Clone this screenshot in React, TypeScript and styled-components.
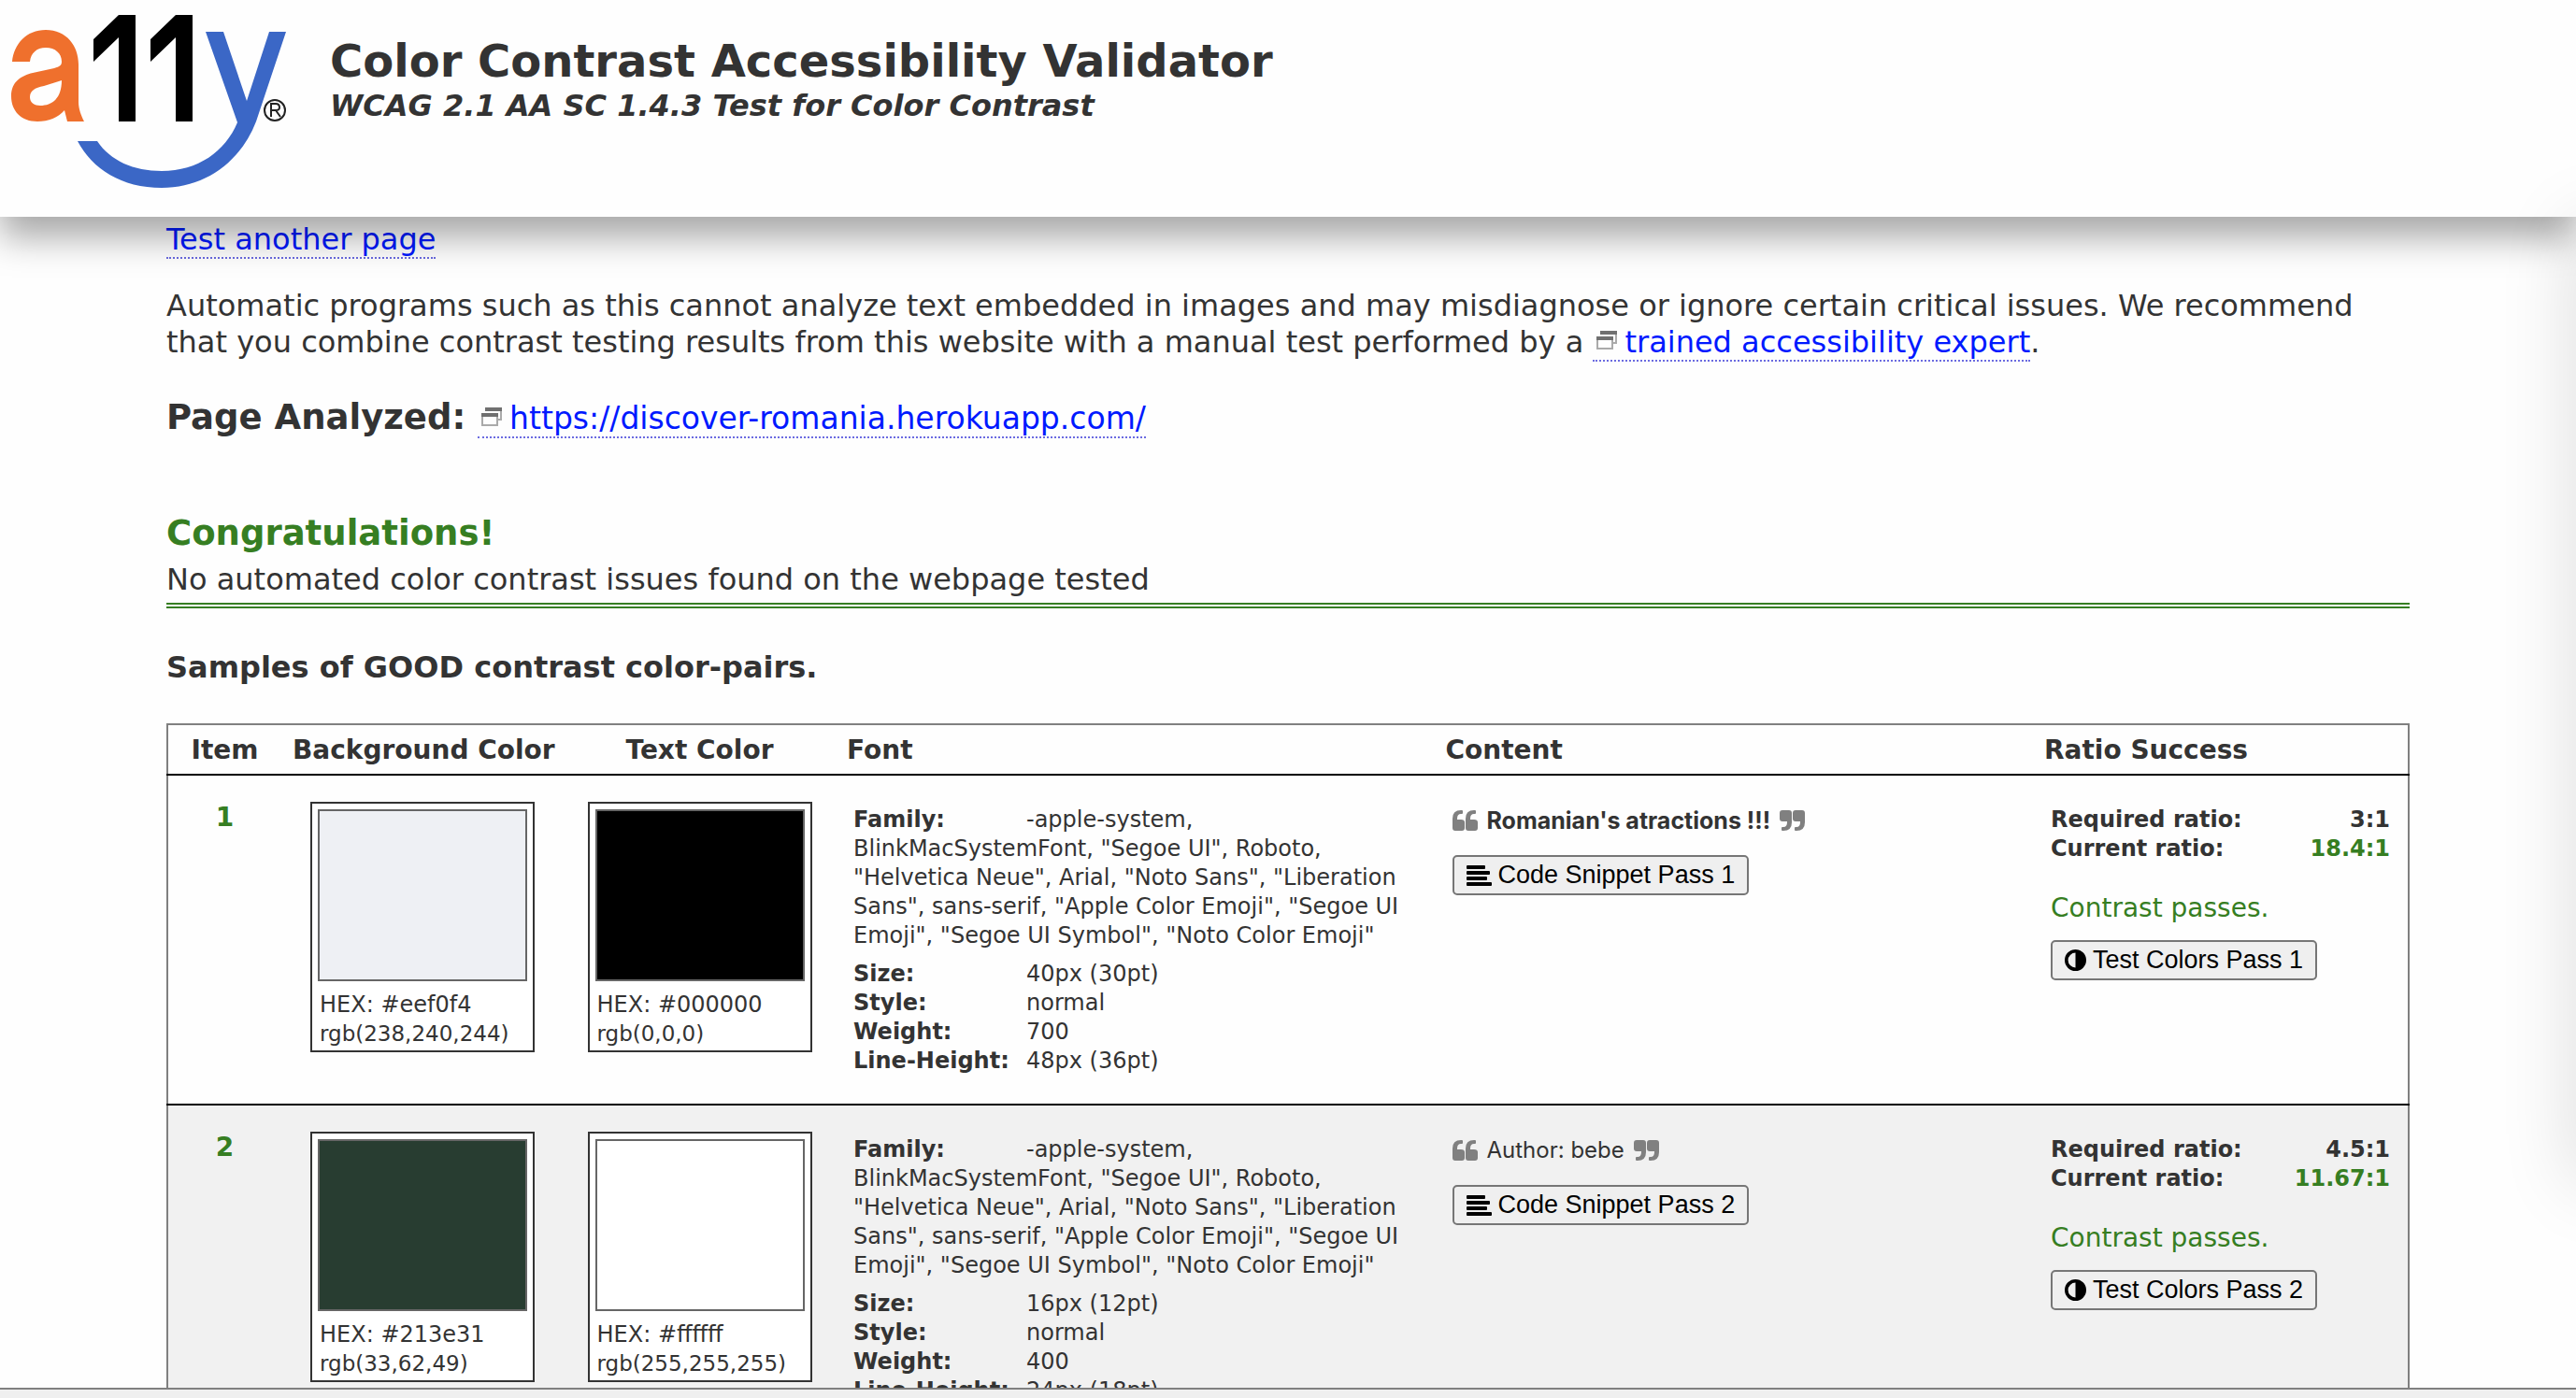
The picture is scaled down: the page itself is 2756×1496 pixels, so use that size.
import React from "react";
import styled, { createGlobalStyle } from "styled-components";

const GREEN = "#367e22";
const INK = "#333";

const GlobalStyle = createGlobalStyle`
  *, *::before, *::after { box-sizing: border-box; }
  html, body { margin: 0; background: #fefefe; }
  html { height: 100%; overflow: hidden; }
  body {
    color: ${INK};
    font-family: Verdana, "DejaVu Sans", sans-serif;
    font-size: 32px;
    line-height: 39px;
  }
`;

const Shell = styled.div`
  display: flex;
  flex-direction: column;
  height: 100vh;
  overflow: hidden;
`;

const Header = styled.header`
  position: relative;
  z-index: 2;
  flex: none;
  display: flex;
  gap: 40px;
  height: 232px;
  padding: 0 10px;
  background: #fefefe;
  box-shadow: 0 22px 36px rgba(0, 0, 0, 0.34);
`;

const Logo = styled.svg`
  flex: none;
  width: 303px;
  height: 210px;
`;

const Titles = styled.div`
  padding-top: 36px;
`;

const Title = styled.h1`
  margin: 0;
  font-size: 48px;
  line-height: 58px;
`;

const Subtitle = styled.p`
  margin: 0;
  font-weight: bold;
  font-style: italic;
`;

const Main = styled.main`
  flex: 1;
  min-height: 0;
  overflow: hidden;
`;

const Content = styled.div`
  max-width: 2400px;
  margin: 0 auto;
  padding-top: 5px;
`;

const Link = styled.a`
  color: #0019ff;
  text-decoration: none;
  border-bottom: 2px dotted #6b6be0;
`;

const Paragraph = styled.p`
  margin: 32px 0 0;
`;

const Analyzed = styled.h2`
  margin: 37px 0 0;
  font-size: 37px;
  line-height: 48px;
`;

const AnalyzedLink = styled(Link)`
  font-size: 33px;
  font-weight: normal;
`;

const NewWindow = styled.svg`
  width: 22px;
  height: 20px;
  margin: 0 8px 0 4px;
  vertical-align: 3px;
`;

const Result = styled.section`
  margin-top: 75px;
  border-bottom: 6px double ${GREEN};
`;

const ResultTitle = styled.h2`
  margin: 0;
  color: ${GREEN};
  font-size: 37px;
  line-height: 48px;
`;

const ResultText = styled.p`
  margin: 0;
  padding: 6px 0 5px;
`;

const SamplesTitle = styled.h3`
  margin: 44px 0 40px;
  font-size: 32px;
`;

const Table = styled.table`
  width: 100%;
  table-layout: fixed;
  border-collapse: collapse;
  border: 2px solid #808080;
`;

const Col = styled.col<{ $w?: number }>`
  width: ${(p) => (p.$w ? `${p.$w}px` : "auto")};
`;

const HeadCell = styled.th<{ $center?: boolean }>`
  padding: 10px 12px 8px;
  font-size: 28px;
  line-height: 34px;
  white-space: nowrap;
  text-align: ${(p) => (p.$center ? "center" : "left")};
`;

const Row = styled.tr`
  border-top: 2px solid #000;
  &:nth-child(even) { background: #f1f1f1; }
`;

const Cell = styled.td`
  padding: 28px 19px;
  vertical-align: top;
  font-size: 24px;
  line-height: 31px;
`;

const ItemCell = styled.th`
  padding: 28px 0;
  vertical-align: top;
  color: ${GREEN};
  font-size: 28px;
  line-height: 34px;
`;

const Swatch = styled.div`
  width: 240px;
  height: 268px;
  margin: 0 auto;
  padding: 6px;
  background: #fff;
  border: 2px solid ${INK};
`;

const Chip = styled.div<{ $color: string }>`
  height: 184px;
  margin-bottom: 10px;
  background: ${(p) => p.$color};
  border: 2px solid #666;
`;

const Hex = styled.div`
  padding-left: 2px;
`;

const Rgb = styled(Hex)`
  font-size: 23px;
`;

const Details = styled.div`
  padding: 4px 0 2px;
`;

const Family = styled.div`
  margin-bottom: 10px;
`;

const Label = styled.b`
  display: inline-block;
  width: 185px;
`;

const Quote = styled.div<{ $bold: boolean }>`
  display: flex;
  align-items: center;
  gap: 10px;
  margin: 6px 0 23px;
  font-family: Inter, sans-serif;
  font-size: ${(p) => (p.$bold ? 25 : 24)}px;
  font-weight: ${(p) => (p.$bold ? "bold" : "normal")};
  line-height: 28px;
`;

const QuoteMark = styled.svg`
  width: 27px;
  height: 22px;
  fill: #808080;
`;

const Button = styled.button`
  display: flex;
  align-items: center;
  gap: 7px;
  height: 43px;
  padding: 0 13px;
  color: #000;
  background: #efefef;
  border: 2px solid #767676;
  border-radius: 5px;
  font-family: Arial, "Liberation Sans", sans-serif;
  font-size: 27px;
  white-space: nowrap;
`;

const RatioRow = styled.div<{ $good?: boolean }>`
  display: flex;
  justify-content: space-between;
  font-weight: bold;
  span:last-child { color: ${(p) => (p.$good ? GREEN : INK)}; }
`;

const Passes = styled.p`
  margin: 31px 0 17px;
  color: ${GREEN};
  font-size: 28px;
  line-height: 34px;
`;

const Footer = styled.footer`
  position: relative;
  z-index: 2;
  flex: none;
  height: 11px;
  background: #efefef;
  border-top: 2px solid #808080;
`;

const EdgeShade = styled.div`
  position: fixed;
  z-index: 3;
  top: 240px;
  bottom: 230px;
  left: 100%;
  width: 60px;
  box-shadow: 0 0 80px rgba(0, 0, 0, 0.15);
`;

const WindowIcon = () => (
  <NewWindow viewBox="0 0 22 20" aria-hidden="true">
    <path d="M5 1H21V13H18" fill="none" stroke="#aaa" strokeWidth="2" />
    <path d="M4 0H22V4H4Z" fill="#707070" />
    <path d="M1 8V19H17V8" fill="#fefefe" stroke="#aaa" strokeWidth="2" />
    <path d="M0 6H18V10H0Z" fill="#707070" />
  </NewWindow>
);

const LeftQuote = () => (
  <QuoteMark viewBox="0 0 27 22" aria-hidden="true">
    {[0, 14].map((x) => (
      <path key={x} transform={`translate(${x} 0)`} d="M0 9Q0 0 9 0H10Q11 0 11 1V3Q11 4 10 4H9Q5 4 5 9V10H9Q13 10 13 13V19Q13 22 10 22H3Q0 22 0 19Z" />
    ))}
  </QuoteMark>
);

const RightQuote = () => (
  <QuoteMark viewBox="0 0 27 22" aria-hidden="true">
    {[0, 14].map((x) => (
      <path key={x} transform={`translate(${x} 0)`} d="M13 13Q13 22 4 22H3Q2 22 2 21V19Q2 18 3 18H4Q8 18 8 13V12H3Q0 12 0 9V3Q0 0 3 0H10Q13 0 13 3Z" />
    ))}
  </QuoteMark>
);

const LinesIcon = () => (
  <svg width="27" height="22" viewBox="0 0 27 22" aria-hidden="true">
    <g fill="#000">
      <rect x="0" y="0" width="20" height="4" rx="1" />
      <rect x="0" y="6" width="25" height="4" rx="1" />
      <rect x="0" y="12" width="22" height="4" rx="1" />
      <rect x="0" y="18" width="27" height="4" rx="1" />
    </g>
  </svg>
);

const ContrastIcon = () => (
  <svg width="23" height="23" viewBox="0 0 23 23" aria-hidden="true">
    <circle cx="11.5" cy="11.5" r="9.7" fill="none" stroke="#000" strokeWidth="3.6" />
    <path d="M11.5 2A9.5 9.5 0 0 1 11.5 21Z" fill="#000" />
  </svg>
);

const families =
  '-apple-system, BlinkMacSystemFont, "Segoe UI", Roboto, "Helvetica Neue", Arial, "Noto Sans", "Liberation Sans", sans-serif, "Apple Color Emoji", "Segoe UI Emoji", "Segoe UI Symbol", "Noto Color Emoji"';

const samples = [
  {
    bg: ["#eef0f4", "rgb(238,240,244)", "#eef0f4"],
    fg: ["#000000", "rgb(0,0,0)", "#000"],
    size: "40px (30pt)", weight: 700, line: "48px (36pt)",
    text: "Romanian's atractions !!!", required: "3:1", current: "18.4:1",
  },
  {
    bg: ["#213e31", "rgb(33,62,49)", "#283d31"],
    fg: ["#ffffff", "rgb(255,255,255)", "#fff"],
    size: "16px (12pt)", weight: 400, line: "24px (18pt)",
    text: "Author: bebe", required: "4.5:1", current: "11.67:1",
  },
];

const ColorSwatch = ({ color }: { color: string[] }) => (
  <Swatch>
    <Chip $color={color[2]} />
    <Hex>HEX: {color[0]}</Hex>
    <Rgb>{color[1]}</Rgb>
  </Swatch>
);

export default function App() {
  return (
    <Shell>
      <GlobalStyle />
      <Header>
        <Logo viewBox="0 0 303 210" role="img" aria-label="a11y">
          <path
            d="M3 66C5 47 18 32 39 32C61 32 74 49 74 69V109C74 117 77 124 80 130H62L59 118C52 126 42 130 30 130C13 130 2 119 2 103C2 87 13 81 25 78L48 73C54 71 56 70 56 66C56 57 49 51 39 51C29 51 23 57 22 66ZM56 86L37 92C27 94 22 97 22 104C22 110 27 113 33 113C46 113 56 105 56 86Z"
            fill="#ef702d"
          />
          <path d="M90 42L117 16H135V130H117V40L90 66ZM151 42L178 16H196V130H178V40L151 66Z" fill="#000" />
          <path
            d="M210 34H229L254 108L278 34H296L264 130C247 174 209 201 163 201C120 201 89 181 73 151H94C108 172 133 183 163 183C202 183 231 162 244 131Z"
            fill="#3b67c6"
          />
          <circle cx="284" cy="118" r="11" fill="none" stroke="#222" strokeWidth="2" />
          <path d="M280 125V111H285Q289 111 289 115Q289 118 285 118H280M285 118L290 125" fill="none" stroke="#222" strokeWidth="2" />
        </Logo>
        <Titles>
          <Title>Color Contrast Accessibility Validator</Title>
          <Subtitle>WCAG 2.1 AA SC 1.4.3 Test for Color Contrast</Subtitle>
        </Titles>
      </Header>

      <Main>
        <Content>
          <Link href="#test">Test another page</Link>
          <Paragraph>
            Automatic programs such as this cannot analyze text embedded in images and may misdiagnose or ignore
            certain critical issues. We recommend that you combine contrast testing results from this website with a
            manual test performed by a <Link href="#expert"><WindowIcon />trained accessibility expert</Link>.
          </Paragraph>
          <Analyzed>
            Page Analyzed:{" "}
            <AnalyzedLink href="#page"><WindowIcon />https://discover-romania.herokuapp.com/</AnalyzedLink>
          </Analyzed>
          <Result>
            <ResultTitle>Congratulations!</ResultTitle>
            <ResultText>No automated color contrast issues found on the webpage tested</ResultText>
          </Result>
          <SamplesTitle>Samples of GOOD contrast color-pairs.</SamplesTitle>
          <Table>
            <colgroup>
              <Col $w={122} />
              <Col $w={302} />
              <Col $w={291} />
              <Col />
              <Col />
              <Col $w={402} />
            </colgroup>
            <thead>
              <tr>
                <HeadCell $center>Item</HeadCell>
                <HeadCell $center>Background Color</HeadCell>
                <HeadCell $center>Text Color</HeadCell>
                <HeadCell>Font</HeadCell>
                <HeadCell>Content</HeadCell>
                <HeadCell>Ratio Success</HeadCell>
              </tr>
            </thead>
            <tbody>
              {samples.map((s, i) => (
                <Row key={s.text}>
                  <ItemCell scope="row">{i + 1}</ItemCell>
                  <Cell><ColorSwatch color={s.bg} /></Cell>
                  <Cell><ColorSwatch color={s.fg} /></Cell>
                  <Cell>
                    <Details>
                      <Family><Label>Family:</Label>{families}</Family>
                      <div><Label>Size:</Label>{s.size}</div>
                      <div><Label>Style:</Label>normal</div>
                      <div><Label>Weight:</Label>{s.weight}</div>
                      <div><Label>Line-Height:</Label>{s.line}</div>
                    </Details>
                  </Cell>
                  <Cell>
                    <Quote $bold={s.weight === 700}><LeftQuote />{s.text}<RightQuote /></Quote>
                    <Button type="button"><LinesIcon />Code Snippet Pass {i + 1}</Button>
                  </Cell>
                  <Cell>
                    <Details>
                      <RatioRow><span>Required ratio:</span><span>{s.required}</span></RatioRow>
                      <RatioRow $good><span>Current ratio:</span><span>{s.current}</span></RatioRow>
                      <Passes>Contrast passes.</Passes>
                      <Button type="button"><ContrastIcon />Test Colors Pass {i + 1}</Button>
                    </Details>
                  </Cell>
                </Row>
              ))}
            </tbody>
          </Table>
        </Content>
      </Main>
      <Footer />
      <EdgeShade />
    </Shell>
  );
}
